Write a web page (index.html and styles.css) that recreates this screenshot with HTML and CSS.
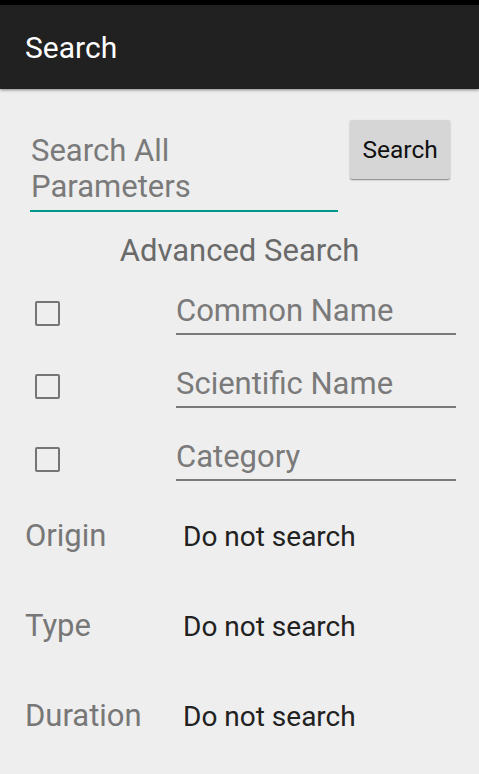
FILE: index.html
```html
<!DOCTYPE html>
<html>
<head>
<meta charset="utf-8">
<link rel="stylesheet" href="styles.css">
</head>
<body>
<div class="status"></div>
<header class="appbar"><span class="title">Search</span></header>
<main class="content">
  <div class="top">
    <div class="edit main-edit"><span class="hint">Search All<br>Parameters</span></div>
    <button class="btn">Search</button>
  </div>
  <div class="adv">Advanced Search</div>
  <div class="checks">
    <div class="check-row">
      <span class="cb"></span>
      <div class="edit field"><span class="hint">Common Name</span></div>
    </div>
    <div class="check-row">
      <span class="cb"></span>
      <div class="edit field"><span class="hint">Scientific Name</span></div>
    </div>
    <div class="check-row">
      <span class="cb"></span>
      <div class="edit field"><span class="hint">Category</span></div>
    </div>
  </div>
  <div class="spin-row"><span class="label">Origin</span><span class="value">Do not search</span></div>
  <div class="spin-row"><span class="label">Type</span><span class="value">Do not search</span></div>
  <div class="spin-row"><span class="label">Duration</span><span class="value">Do not search</span></div>
</main>
</body>
</html>
```
FILE: styles.css
```css
html, body {
  margin: 0;
  padding: 0;
  background: #eeeeee;
  font-family: Roboto, "Noto Sans", sans-serif;
  width: 479px;
  height: 774px;
  overflow: hidden;
}
.status {
  height: 5px;
  background: #000;
}
.appbar {
  height: 84px;
  background: #212121;
  display: flex;
  align-items: center;
  padding-left: 25px;
  box-shadow: 0 1px 3px rgba(0,0,0,0.45);
  position: relative;
}
.title {
  color: #fff;
  font-size: 30px;
}
.top {
  display: flex;
  align-items: flex-start;
  padding: 31px 29px 0 30px;
}
.main-edit {
  width: 308px;
  border-bottom: 2px solid #009688;
  padding: 13px 0 5px 1px;
}
.hint {
  color: #7a7a7a;
  font-size: 31px;
  line-height: 36px;
  display: block;
  white-space: nowrap;
}
.btn {
  margin-left: 12px;
  width: 100px;
  height: 59px;
  background: #d6d6d6;
  border: none;
  border-radius: 2px;
  box-shadow: 0 1px 1.5px rgba(0,0,0,0.45);
  font-family: Roboto, "Noto Sans", sans-serif;
  font-size: 24.5px;
  color: #111;
  padding: 0;
}
.adv {
  text-align: center;
  color: #6a6a6a;
  font-size: 31px;
  line-height: 36px;
  margin-top: 21px;
}
.checks {
  margin-top: 8px;
}
.check-row {
  display: flex;
  align-items: center;
  height: 73px;
  padding-left: 35px;
}
.cb {
  width: 21px;
  height: 21px;
  border: 2.5px solid #757575;
  border-radius: 2px;
  flex: none;
}
.field {
  margin-left: 116px;
  width: 280px;
  border-bottom: 2px solid #7a7a7a;
  padding: 0 0 4px 0;
}
.spin-row {
  display: flex;
  align-items: baseline;
  height: 90px;
  box-sizing: border-box;
  padding: 22px 0 0 25px;
  line-height: 36px;
}
.label {
  width: 158px;
  color: #777;
  font-size: 31px;
}
.value {
  color: #212121;
  font-size: 28px;
}
```
